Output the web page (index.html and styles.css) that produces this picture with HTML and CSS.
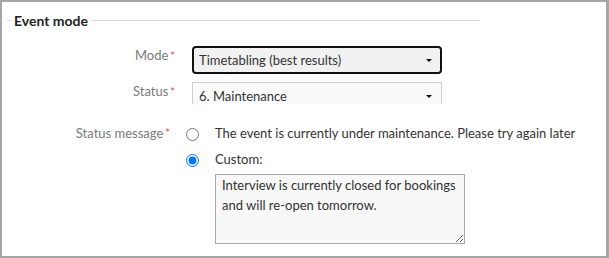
FILE: index.html
```html
<!DOCTYPE html>
<html lang="en">
<head>
    <meta charset="UTF-8">
    <meta name="viewport" content="width=device-width, initial-scale=1.0">
    <title>Event mode</title>
    <link rel="stylesheet" href="styles.css">
</head>
<body>
    <div class="panel">
        <fieldset class="group">
            <legend>Event mode</legend>
            <div class="field field-first">
                <label class="field-label" for="mode">Mode<span class="req">*</span></label>
                <div class="field-control">
                    <div class="select-wrap">
                        <select id="mode" class="select select-active">
                            <option>Timetabling (best results)</option>
                        </select>
                    </div>
                </div>
            </div>
            <div class="field">
                <label class="field-label" for="status">Status<span class="req">*</span></label>
                <div class="field-control">
                    <div class="select-wrap select-clip">
                        <select id="status" class="select">
                            <option>6. Maintenance</option>
                        </select>
                    </div>
                </div>
            </div>
            <div class="field field-radios">
                <label class="field-label">Status message<span class="req">*</span></label>
                <div class="field-control">
                    <label class="radio">
                        <input type="radio" name="msg">
                        <span>The event is currently under maintenance. Please try again later</span>
                    </label>
                    <label class="radio">
                        <input type="radio" name="msg" checked>
                        <span>Custom:</span>
                    </label>
                    <textarea class="message">Interview is currently closed for bookings and will re-open tomorrow.</textarea>
                </div>
            </div>
        </fieldset>
    </div>
</body>
</html>
```

FILE: styles.css
```css
body {
    font-family: Lato, "Open Sans", sans-serif;
    font-size: 13px;
    color: #333;
    margin: 0;
    padding: 0;
    background-color: #fff;
}
.panel {
    width: 609px;
    height: 258px;
    box-sizing: border-box;
    border: 2px solid #a6a6a6;
    border-right-width: 3px;
    overflow: hidden;
}
.group {
    border: 0;
    border-top: 1px solid #dcdcdc;
    margin: 10px 126px 0 5px;
    padding: 0 0 0 4px;
    min-width: 0;
}
.group legend {
    font-size: 14px;
    font-weight: bold;
    color: #222;
    padding: 0 3px;
}
.field {
    display: grid;
    grid-template-columns: 170px 1fr;
    margin-top: 8px;
}
.field-first {
    margin-top: 17px;
}
.field-label {
    text-align: right;
    padding-right: 6px;
    color: #7a7a7a;
    line-height: 19px;
}
.req {
    color: #e0473f;
    margin-left: 2px;
    font-size: 11px;
    vertical-align: top;
}
.field-control {
    padding-left: 11px;
}
.select-wrap {
    position: relative;
    width: 250px;
}
.select-wrap::after {
    content: "";
    position: absolute;
    right: 10px;
    top: 13px;
    border-left: 3px solid transparent;
    border-right: 3px solid transparent;
    border-top: 3px solid #111;
}
.select-clip {
    height: 22px;
    overflow: hidden;
}
.select {
    appearance: none;
    width: 250px;
    height: 28px;
    box-sizing: border-box;
    font-family: Lato, sans-serif;
    font-size: 13px;
    color: #333;
    padding: 0 6px;
    border: 1px solid #cfcfcf;
    border-radius: 0;
    background-color: #fafafa;
    outline: none;
}
.select-active {
    border: 2px solid #111;
    border-radius: 4px;
    padding: 0 5px;
    background-color: #f1f1f1;
}
.field-radios {
    margin-top: 19px;
}
.field-radios .field-label {
    padding-right: 11px;
    line-height: 20px;
}
.field-radios .field-control {
    padding-left: 0;
}
.radio {
    display: flex;
    align-items: center;
    height: 20px;
    margin-bottom: 6px;
    white-space: nowrap;
}
.radio input {
    margin: 3px 3px 0 5px;
}
.radio span {
    margin-left: 13px;
    line-height: 20px;
}
.message {
    display: block;
    box-sizing: border-box;
    width: 250px;
    height: 70px;
    margin: -1px 0 0 34px;
    padding: 0 6px;
    border: 1px solid #a9a9a9;
    background-color: #f8f8f8;
    font-family: Lato, sans-serif;
    font-size: 13px;
    line-height: 20px;
    color: #333;
}
```
